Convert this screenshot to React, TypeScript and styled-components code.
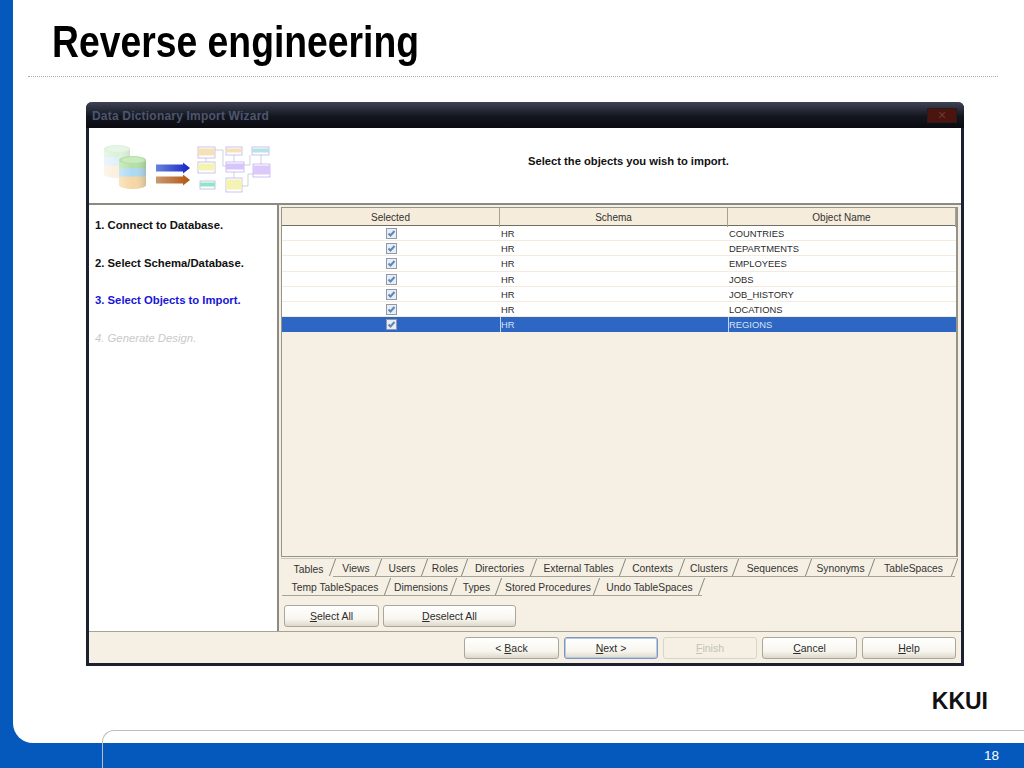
import { createGlobalStyle, styled } from "styled-components";

const GlobalStyle = createGlobalStyle`
  html, body {
    margin: 0;
    padding: 0;
    background: #0559bd;
  }
  #root {
    width: 1024px;
    height: 768px;
    overflow: hidden;
  }
`;

const Slide = styled.div`
  position: relative;
  width: 1024px;
  height: 768px;
  display: flex;
  flex-direction: column;
  background: #0559bd;
  font-family: "Liberation Sans", Arial, sans-serif;
`;

const Sheet = styled.main`
  margin-left: 13px;
  height: 743px;
  flex: none;
  display: flex;
  flex-direction: column;
  background: #fff;
  border-bottom-left-radius: 20px;
`;

const Title = styled.h1`
  margin: 0;
  padding: 17px 0 0 39px;
  height: 60px;
  box-sizing: border-box;
  font-size: 44px;
  line-height: 50px;
  font-weight: bold;
  color: #000;
  white-space: nowrap;
  transform: scaleX(0.848);
  transform-origin: 39px 0;
`;

const Rule = styled.div`
  margin: 16px 26px 0 15px;
  border-top: 1px dotted #a9a9a9;
`;

const Wizard = styled.section`
  margin: 25px 0 0 73px;
  width: 878px;
  height: 564px;
  box-sizing: border-box;
  display: grid;
  grid-template-rows: 26px 77px 426px 32px;
  border: solid #1d2030;
  border-width: 0 3px 3px;
  border-radius: 6px 6px 0 0;
  background: #f5f0e3;
  font-size: 10.5px;
  color: #222;
`;

const TitleBar = styled.header`
  margin: 0 -3px;
  padding: 0 7px 0 6px;
  display: flex;
  align-items: center;
  justify-content: space-between;
  background: linear-gradient(#3f4356, #14161f 55%, #0a0b10);
  border-radius: 6px 6px 0 0;
`;

const WindowTitle = styled.span`
  padding-top: 1px;
  font-size: 12px;
  font-weight: bold;
  letter-spacing: 0.2px;
  color: #4d566f;
`;

const CloseButton = styled.span`
  width: 30px;
  height: 15px;
  display: flex;
  align-items: center;
  justify-content: center;
  background: #4b140e;
  border: 1px solid #2c1a1a;
  box-sizing: border-box;
  color: #6d3a34;
  font-size: 14px;
  line-height: 1;
`;

const Banner = styled.div`
  display: flex;
  align-items: center;
  background: #fff;
  border-bottom: 2px solid #8b8b84;
  box-sizing: border-box;
  padding-left: 6px;
`;

const BannerArt = styled.svg`
  width: 180px;
  height: 56px;
  flex: none;
  margin-top: 5px;
`;

const BannerText = styled.div`
  margin: 0 0 9px 253px;
  font-size: 11.2px;
  font-weight: bold;
  color: #111;
`;

const Body = styled.div`
  display: grid;
  grid-template-columns: 190px 1fr;
  min-height: 0;
`;

const Steps = styled.nav`
  display: flex;
  flex-direction: column;
  gap: 23.7px;
  padding: 13px 0 0 6px;
  background: #fff;
  border-right: 2px solid #8b8b84;
  box-sizing: border-box;
`;

const Step = styled.div<{ $state?: "active" | "todo" }>`
  height: 14px;
  line-height: 14px;
  font-size: 11.3px;
  font-weight: ${(p) => (p.$state === "todo" ? "normal" : "bold")};
  font-style: ${(p) => (p.$state === "todo" ? "italic" : "normal")};
  color: ${(p) =>
    p.$state === "active" ? "#1616d6" : p.$state === "todo" ? "#c9c9c9" : "#111"};
`;

const RightPane = styled.div`
  display: flex;
  flex-direction: column;
  padding: 2px 3px 0 2px;
  min-width: 0;
`;

const Grid = styled.div`
  height: 350px;
  flex: none;
  box-sizing: border-box;
  border: 1px solid #94948a;
  border-right-width: 2px;
  background: #f5f0e3;
  overflow: hidden;
`;

const Row = styled.div<{ $selected?: boolean }>`
  display: grid;
  grid-template-columns: 218px 228px 1fr;
  height: 15.2px;
  line-height: 15px;
  font-size: 9.4px;
  background: ${(p) => (p.$selected ? "#2e66c3" : "#fff")};
  color: ${(p) => (p.$selected ? "#d5e2f6" : "#2b2b2b")};
  box-shadow: inset 0 -1px 0 ${(p) => (p.$selected ? "#2e66c3" : "#f3ecdd")};
`;

const HeaderRow = styled.div`
  display: grid;
  grid-template-columns: 218px 228px 1fr;
  height: 17px;
  background: #f5ecdc;
  border-bottom: 1px solid #6f6f66;
`;

const HeaderCell = styled.div`
  line-height: 19px;
  text-align: center;
  font-size: 10px;
  color: #333;
  border-right: 1px solid #a5a296;
`;

const Cell = styled.div<{ $selected?: boolean }>`
  border-left: 1px solid ${(p) => (p.$selected ? "#c4d6f2" : "transparent")};
  overflow: hidden;
  white-space: nowrap;
`;

const CheckCell = styled.div`
  display: flex;
  align-items: center;
  justify-content: center;
`;

const CheckBox = styled.span`
  width: 11px;
  height: 11px;
  box-sizing: border-box;
  display: flex;
  align-items: center;
  justify-content: center;
  background: #e9eef4;
  border: 1px solid #8d9aaa;
`;

const TabStrip = styled.div`
  margin-top: 1px;
  height: 37px;
  flex: none;
  border-top: 1px solid #c9c7bb;
`;

const TabRow = styled.div<{ $lead: number }>`
  display: flex;
  height: 18px;
  padding-left: ${(p) => p.$lead}px;
  margin-bottom: 1px;
`;

const Tab = styled.div<{ $width: number; $active?: boolean }>`
  position: relative;
  width: ${(p) => p.$width}px;
  height: 18px;
  flex: none;
  box-sizing: border-box;
  line-height: ${(p) => (p.$active ? "21px" : "19px")};
  font-size: 10.3px;
  text-align: center;
  color: #333;
  white-space: nowrap;
  border-bottom: 1px solid ${(p) => (p.$active ? "transparent" : "#a3a398")};

  &::after {
    content: "";
    position: absolute;
    right: 0;
    top: 0;
    height: 17px;
    border-right: 1px solid #85857b;
    transform: skewX(-20deg);
  }
`;

const SelectionButtons = styled.div`
  display: flex;
  gap: 4px;
  padding: 9px 0 0 3px;
`;

const Button = styled.button<{ $width: number; $focus?: boolean }>`
  width: ${(p) => p.$width}px;
  height: 22px;
  padding: 0;
  box-sizing: border-box;
  font-family: inherit;
  font-size: 10.5px;
  color: ${(p) => (p.disabled ? "#c4c2b8" : "#2b2b2b")};
  background: ${(p) =>
    p.disabled ? "#f5f0e3" : "linear-gradient(#ffffff, #f8f6ef 65%, #dcd8ca)"};
  border: 1px solid ${(p) => (p.disabled ? "#d8d5c9" : p.$focus ? "#7d97bd" : "#a9a79c")};
  box-shadow: ${(p) => (p.$focus ? "inset 0 0 0 1px #b9c9e2" : "none")};
  border-radius: 3px;
`;

const Footer = styled.footer`
  display: flex;
  justify-content: flex-end;
  gap: 5px;
  padding: 5px 5px 0 0;
  border-top: 1px solid #a5a296;
  box-sizing: border-box;
`;

const Brand = styled.div`
  margin: 22px 36px 0 0;
  text-align: right;
  font-size: 23px;
  line-height: 26px;
  font-weight: bold;
  color: #111;
`;

const PageStrip = styled.div`
  flex: 1;
  display: flex;
  align-items: center;
  justify-content: flex-end;
  padding-right: 25px;
  font-size: 13.5px;
  color: #fff;
`;

const CornerLine = styled.div`
  position: absolute;
  left: 102px;
  right: 0;
  top: 730px;
  bottom: 0;
  border: solid #bdbdbd;
  border-width: 1px 0 0 1px;
  border-top-left-radius: 12px;
  pointer-events: none;
`;

const tabRows = [
  {
    lead: 3,
    tabs: [
      ["Tables", 49, true],
      ["Views", 46],
      ["Users", 46],
      ["Roles", 40],
      ["Directories", 69],
      ["External Tables", 89],
      ["Contexts", 59],
      ["Clusters", 54],
      ["Sequences", 73],
      ["Synonyms", 63],
      ["TableSpaces", 83],
    ],
  },
  {
    lead: 1,
    tabs: [
      ["Temp TableSpaces", 106],
      ["Dimensions", 66],
      ["Types", 45],
      ["Stored Procedures", 98],
      ["Undo TableSpaces", 105],
    ],
  },
] as { lead: number; tabs: [string, number, boolean?][] }[];

const objects = [
  "COUNTRIES",
  "DEPARTMENTS",
  "EMPLOYEES",
  "JOBS",
  "JOB_HISTORY",
  "LOCATIONS",
  "REGIONS",
];

const Cylinder = ({ x, y, w, colors }: { x: number; y: number; w: number; colors: string[] }) => {
  const band = 8.3;
  const bottom = y + colors.length * band;
  return (
    <g>
      {colors.map((c, i) => {
        const top = y + i * band;
        return (
          <path
            key={c}
            d={`M${x} ${top}v${band}a${w / 2} 4 0 0 0 ${w} 0v-${band}z`}
            fill={c}
          />
        );
      })}
      <path
        d={`M${x} ${y}V${bottom}a${w / 2} 4 0 0 0 ${w} 0V${y}z`}
        fill="url(#cylinderShade)"
      />
      <ellipse cx={x + w / 2} cy={y} rx={w / 2} ry={4} fill={colors[0]} />
      <ellipse cx={x + w / 2} cy={y} rx={w / 2 - 2} ry={3} fill="#fff" fillOpacity="0.3" />
    </g>
  );
};

const DiagramBox = ({ x, y, w, h, fill }: { x: number; y: number; w: number; h: number; fill: string }) => (
  <g>
    <rect x={x} y={y} width={w} height={h} fill="#fff" stroke="#b3a8ea" strokeWidth="0.7" />
    <rect x={x} y={y + 1.5} width={w} height={h - 4} fill={fill} />
  </g>
);

const ImportArt = () => (
  <BannerArt viewBox="95 140 180 56">
    <defs>
      <filter id="soft">
        <feGaussianBlur stdDeviation="0.55" />
      </filter>
      <linearGradient id="cylinderShade">
        <stop offset="0" stopColor="#fff" stopOpacity="0.35" />
        <stop offset="0.5" stopColor="#fff" stopOpacity="0" />
        <stop offset="1" stopColor="#7a7a60" stopOpacity="0.3" />
      </linearGradient>
      <linearGradient id="blueArrow">
        <stop offset="0" stopColor="#6a82dc" />
        <stop offset="1" stopColor="#1525c4" />
      </linearGradient>
      <linearGradient id="orangeArrow">
        <stop offset="0" stopColor="#c79a72" />
        <stop offset="1" stopColor="#b4560f" />
      </linearGradient>
    </defs>
    <g filter="url(#soft)">
      <g opacity="0.55">
        <Cylinder x={104} y={149} w={26} colors={["#bfe6bb", "#c8e3f6", "#f9e3c1"]} />
      </g>
      <Cylinder x={119} y={160} w={27} colors={["#b2e0a4", "#abd9f5", "#f6d6a4"]} />
      <path d="M156 164.500h27v-2l7 5.500-7 5.500v-2h-27z" fill="url(#blueArrow)" />
      <path d="M156 176.500h27v-2l7 5.500-7 5.500v-2h-27z" fill="url(#orangeArrow)" />
      <g fill="none" stroke="#b9c2c9" strokeWidth="0.7">
        <path d="M215 150h8v16h3M206 158v4M234 155v7M234 172v6M242 186h6v-12h5M244 165h6v-10M261 155v9" />
      </g>
      <DiagramBox x={198} y={147} w={17} h={11} fill="#f6e0b8" />
      <DiagramBox x={198} y={162} w={17} h={11} fill="#f4f3b4" />
      <DiagramBox x={200} y={181} w={15} h={8} fill="#8fe6c4" />
      <DiagramBox x={226} y={147} w={16} h={8} fill="#f6e0b8" />
      <DiagramBox x={226} y={162} w={18} h={10} fill="#d6c4fb" />
      <DiagramBox x={226} y={178} w={16} h={14} fill="#f4f3b4" />
      <DiagramBox x={252} y={147} w={17} h={8} fill="#b4e4e6" />
      <DiagramBox x={253} y={164} w={17} h={13} fill="#dcc8fb" />
    </g>
  </BannerArt>
);

const Check = () => (
  <svg width="9" height="9" viewBox="0 0 9 9">
    <path d="M1.500 4.500l2 2 4-4.500" fill="none" stroke="#5f86bd" strokeWidth="2" />
  </svg>
);

export default function App() {
  return (
    <Slide>
      <GlobalStyle />
      <Sheet>
        <Title>Reverse engineering</Title>
        <Rule />
        <Wizard>
          <TitleBar>
            <WindowTitle>Data Dictionary Import Wizard</WindowTitle>
            <CloseButton>×</CloseButton>
          </TitleBar>
          <Banner>
            <ImportArt />
            <BannerText>Select the objects you wish to import.</BannerText>
          </Banner>
          <Body>
            <Steps>
              <Step>1. Connect to Database.</Step>
              <Step>2. Select Schema/Database.</Step>
              <Step $state="active">3. Select Objects to Import.</Step>
              <Step $state="todo">4. Generate Design.</Step>
            </Steps>
            <RightPane>
              <Grid>
                <HeaderRow>
                  <HeaderCell>Selected</HeaderCell>
                  <HeaderCell>Schema</HeaderCell>
                  <HeaderCell>Object Name</HeaderCell>
                </HeaderRow>
                {objects.map((name) => {
                  const selected = name === "REGIONS";
                  return (
                    <Row key={name} $selected={selected}>
                      <CheckCell>
                        <CheckBox>
                          <Check />
                        </CheckBox>
                      </CheckCell>
                      <Cell $selected={selected}>HR</Cell>
                      <Cell $selected={selected}>{name}</Cell>
                    </Row>
                  );
                })}
              </Grid>
              <TabStrip>
                {tabRows.map((row, i) => (
                  <TabRow key={i} $lead={row.lead}>
                    {row.tabs.map(([label, width, active]) => (
                      <Tab key={label} $width={width} $active={active}>
                        {label}
                      </Tab>
                    ))}
                  </TabRow>
                ))}
              </TabStrip>
              <SelectionButtons>
                <Button $width={95}>
                  <u>S</u>elect All
                </Button>
                <Button $width={133}>
                  <u>D</u>eselect All
                </Button>
              </SelectionButtons>
            </RightPane>
          </Body>
          <Footer>
            <Button $width={95}>
              &lt; <u>B</u>ack
            </Button>
            <Button $width={94} $focus>
              <u>N</u>ext &gt;
            </Button>
            <Button $width={94} disabled>
              <u>F</u>inish
            </Button>
            <Button $width={95}>
              <u>C</u>ancel
            </Button>
            <Button $width={94}>
              <u>H</u>elp
            </Button>
          </Footer>
        </Wizard>
        <Brand>KKUI</Brand>
      </Sheet>
      <PageStrip>18</PageStrip>
      <CornerLine />
    </Slide>
  );
}
